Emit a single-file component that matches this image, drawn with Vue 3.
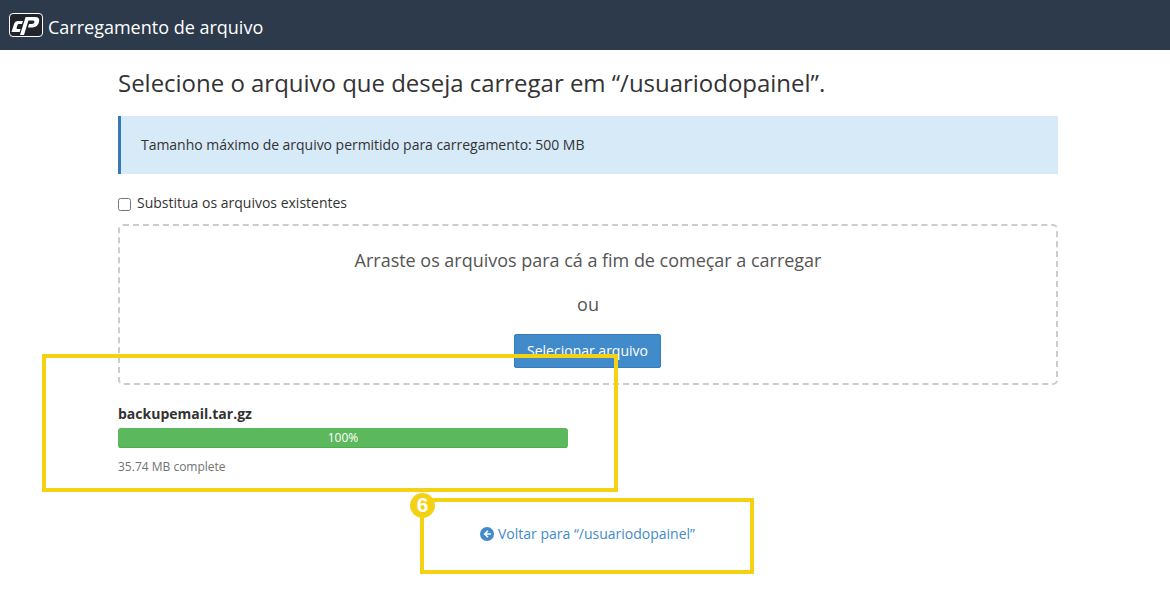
<template>
  <div class="page">
    <header class="topbar">
      <svg class="logo" width="34" height="24" viewBox="0 0 34 24">
        <rect x="0.5" y="0.5" width="33" height="23" rx="3.5" fill="#20252b" stroke="#fff" stroke-width="1" />
        <path d="M2.5 19 L5.2 10.5 Q6 8 8.6 8 H14 L13 11 H9.8 Q8.8 11 8.5 12 L7.6 15 Q7.3 16 8.3 16 H11.6 L10.7 19 Z" fill="#fff" />
        <path d="M11 22 L16.6 4 H26 Q31.2 4 30 9 Q28.8 14.4 23.4 14.4 H19 L20 11 H23 Q25 11 25.4 9.2 Q25.8 7.4 24 7.4 H19.4 L15 22 Z" fill="#fff" />
      </svg>
      <span class="app-title">Carregamento de arquivo</span>
    </header>

    <main class="content">
      <h1>Selecione o arquivo que deseja carregar em “/usuariodopainel”.</h1>
      <div class="alert">Tamanho máximo de arquivo permitido para carregamento: 500 MB</div>
      <label class="overwrite">
        <input type="checkbox" />
        <span>Substitua os arquivos existentes</span>
      </label>
      <section class="dropzone">
        <p class="drop-text">Arraste os arquivos para cá a fim de começar a carregar</p>
        <p class="drop-or">ou</p>
        <button class="select-btn" type="button">Selecionar arquivo</button>
      </section>
      <section class="upload">
        <div class="file-name">backupemail.tar.gz</div>
        <div class="progress"><div class="bar" :style="{ width: progress + '%' }">{{ progress }}%</div></div>
        <div class="status">35.74 MB complete</div>
      </section>
      <div class="back-row">
        <a class="back-link" href="#">
          <svg width="14" height="14" viewBox="0 0 14 14">
            <circle cx="7" cy="7" r="7" fill="#428bca" />
            <path d="M7.4 3.2 L3.6 7 L7.4 10.8 L8.5 9.7 L6.6 7.8 H11 V6.2 H6.6 L8.5 4.3 Z" fill="#fff" />
          </svg>
          <span>Voltar para “/usuariodopainel”</span>
        </a>
      </div>
    </main>

    <div class="mark mark-a"></div>
    <div class="mark mark-b"></div>
    <div class="badge">6</div>
  </div>
</template>

<script setup>
const progress = 100
</script>

<style>
html, body { margin: 0; background: #fff; }
</style>

<style scoped>
.page {
  position: relative;
  height: 601px;
  overflow: hidden;
  font-family: "Open Sans", sans-serif;
  color: #333;
  background: #fff;
}
.topbar {
  height: 50px;
  box-sizing: border-box;
  background: #2c3a4b;
  display: flex;
  align-items: center;
  padding: 4px 0 0 9px;
  gap: 5px;
}
.logo { display: block; margin-top: -4px; }
.app-title {
  color: #fff;
  font-size: 18px;
  line-height: 24px;
}
.content {
  width: 940px;
  margin-left: 118px;
}
h1 {
  margin: 0;
  padding-top: 16px;
  padding-bottom: 1px;
  font-size: 24px;
  line-height: 33px;
  font-weight: 400;
  color: #333;
  letter-spacing: -0.02px;
}
.alert {
  margin-top: 16px;
  height: 58px;
  box-sizing: border-box;
  background: #d6eaf8;
  border-left: 3px solid #337ab7;
  padding: 0 0 2px 20px;
  display: flex;
  align-items: center;
  font-size: 14px;
  letter-spacing: -0.03px;
}
.overwrite {
  display: flex;
  align-items: center;
  margin-top: 19px;
  height: 20px;
  font-size: 14px;
  gap: 6px;
}
.overwrite span { margin-top: -2px; }
.overwrite input {
  margin: 2px 0 0;
  width: 13px;
  height: 13px;
}
.dropzone {
  margin-top: 11px;
  height: 161px;
  box-sizing: border-box;
  border: 2px dashed #ccc;
  border-radius: 5px;
  text-align: center;
  padding-top: 22px;
  color: #555;
}
.drop-text {
  margin: 0;
  font-size: 18px;
  line-height: 25px;
  letter-spacing: -0.02px;
}
.drop-or {
  margin: 19px 0 0;
  font-size: 18px;
  line-height: 25px;
}
.select-btn {
  display: block;
  margin: 17px 0 0 394px;
  width: 147px;
  height: 34px;
  background: #428bca;
  border: 1px solid #357ebd;
  border-radius: 2px;
  color: #fff;
  font-family: inherit;
  font-size: 14px;
  padding: 0 0 2px;
}
.upload { margin-top: 19px; }
.file-name {
  font-weight: 700;
  font-size: 14px;
  line-height: 20px;
}
.progress {
  margin-top: 4px;
  width: 450px;
  height: 20px;
  border-radius: 3px;
  background: #f5f5f5;
  overflow: hidden;
}
.bar {
  height: 100%;
  box-sizing: border-box;
  background: #5cb85c;
  border-bottom: 1px solid #4cae4c;
  color: #fff;
  font-size: 12px;
  line-height: 20px;
  text-align: center;
}
.status {
  margin-top: 10px;
  margin-bottom: -1px;
  font-size: 12px;
  line-height: 18px;
  color: #737373;
}
.back-row {
  margin-top: 49px;
  margin-left: 362px;
}
.back-link {
  display: inline-flex;
  align-items: center;
  gap: 4px;
  color: #428bca;
  font-size: 14px;
  line-height: 20px;
  text-decoration: none;
}
.mark {
  position: absolute;
  box-sizing: border-box;
  border: 4px solid #f4d213;
}
.mark-a { left: 42px; top: 354px; width: 576px; height: 138px; }
.mark-b { left: 420px; top: 498px; width: 334px; height: 76px; }
.badge {
  position: absolute;
  left: 410px;
  top: 493px;
  width: 25px;
  height: 25px;
  border-radius: 50%;
  background: #f4d213;
  color: #fff;
  font-family: "Liberation Sans", sans-serif;
  font-weight: 700;
  font-size: 21px;
  line-height: 23px;
  text-align: center;
}
</style>
